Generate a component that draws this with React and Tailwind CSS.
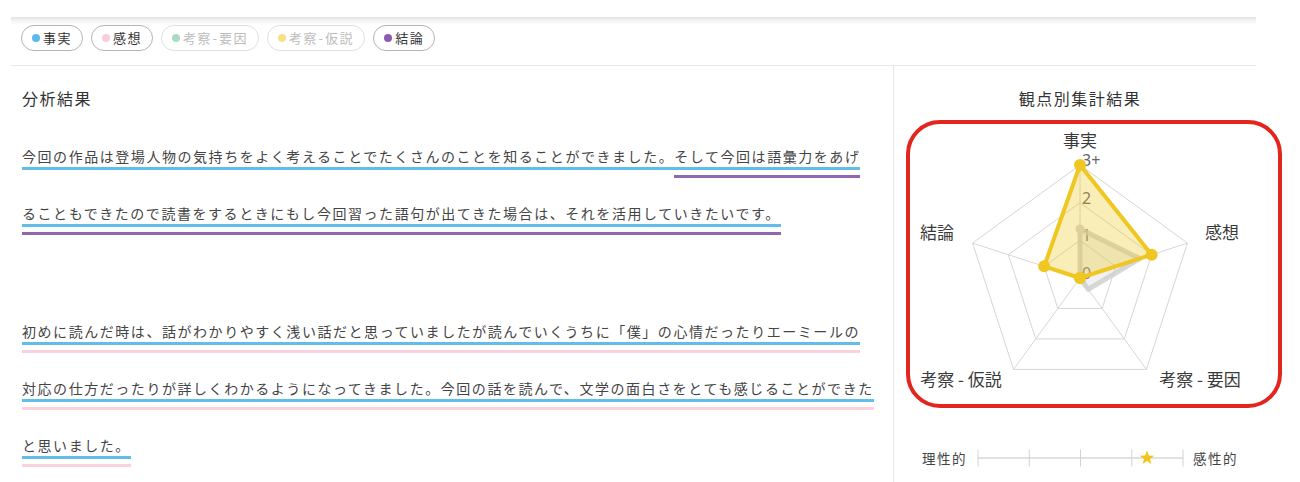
import React from 'react';

const BLUE = 'bg-[#62bdeb]';
const PURPLE = 'bg-[#8f68b1]';
const PINK = 'bg-[#f9d2df]';

const tags = [
  { label: '事実', dot: 'bg-[#5bb9ec]', on: true },
  { label: '感想', dot: 'bg-[#f8cddc]', on: true },
  { label: '考察 - 要因', dot: 'bg-[#a8dbc0]', on: false },
  { label: '考察 - 仮説', dot: 'bg-[#f3e388]', on: false },
  { label: '結論', dot: 'bg-[#8c5dae]', on: true },
];

const para1 = [
  [
    { t: '今回の作品は登場人物の気持ちをよく考えることでたくさんのことを知ることができました。', u: [BLUE] },
    { t: 'そして今回は語彙力をあげ', u: [BLUE, PURPLE] },
  ],
  [{ t: 'ることもできたので読書をするときにもし今回習った語句が出てきた場合は、それを活用していきたいです。', u: [BLUE, PURPLE] }],
];

const para2 = [
  [{ t: '初めに読んだ時は、話がわかりやすく浅い話だと思っていましたが読んでいくうちに「僕」の心情だったりエーミールの', u: [BLUE, PINK] }],
  [{ t: '対応の仕方だったりが詳しくわかるようになってきました。今回の話を読んで、文学の面白さをとても感じることができた', u: [BLUE, PINK] }],
  [{ t: 'と思いました。', u: [BLUE, PINK] }],
];

function Tag({ label, dot, on }) {
  const parts = label.split(' - ');
  return (
    <div
      className={`flex items-center gap-[3px] h-[26px] px-[10px] rounded-full border ${
        on ? 'border-[#b5b5b5] text-[#333]' : 'border-[#e0e0e0] text-[#bdbdbd]'
      }`}
    >
      <span className={`w-[8px] h-[8px] rounded-full ${dot}`} />
      <span className="flex text-[13px] tracking-[1.5px] leading-[24px] whitespace-nowrap">
        <span>{parts[0]}</span>
        {parts.length > 1 && (
          <>
            <span className="tracking-normal pl-[0.5px] pr-[2px]">-</span>
            <span>{parts[1]}</span>
          </>
        )}
      </span>
    </div>
  );
}

function Row({ segs }) {
  return (
    <div className="flex items-start h-[57px] whitespace-nowrap">
      {segs.map((s, i) => (
        <span key={i} className="flex flex-col">
          <span className="text-[14px] leading-[20px] tracking-[1.55px] text-[#444]">{s.t}</span>
          {s.u.map((c, j) => (
            <span key={j} className={`h-[3px] ${c} ${j === 0 ? 'mt-[0.5px]' : 'mt-[5px]'}`} />
          ))}
        </span>
      ))}
    </div>
  );
}

// radar geometry
const CX = 185;
const CY = 168;
const R = 113;
const pt = (i, v) => {
  const a = ((-90 + 72 * i) * Math.PI) / 180;
  const r = (v / 3) * R;
  return [CX + r * Math.cos(a), CY + r * Math.sin(a)];
};
const poly = (vals) => vals.map((v, i) => pt(i, v).join(',')).join(' ');

const yellow = [3, 2, 0, 0, 1];
const gray = [1.3, 1.67, 0.37, 0, 0];

const axisLabels = [
  { t: '事実', x: 185, y: 29 },
  { t: '感想', x: 327, y: 121 },
  { t: '考察 - 要因', x: 305, y: 268 },
  { t: '考察 - 仮説', x: 66, y: 268 },
  { t: '結論', x: 42, y: 121 },
];

function Radar() {
  return (
    <svg width="361" height="300" viewBox="0 0 361 300" className="block">
      {[1, 2, 3].map((l) => (
        <polygon key={l} points={poly([l, l, l, l, l])} fill="none" stroke="#d6d6d6" strokeWidth="1" />
      ))}
      {[0, 1, 2, 3, 4].map((i) => {
        const [x, y] = pt(i, 3);
        return <line key={i} x1={CX} y1={CY} x2={x} y2={y} stroke="#d6d6d6" strokeWidth="1" />;
      })}
      {['0', '1', '2', '3+'].map((t, l) => (
        <text
          key={t}
          x={CX + 2}
          y={CY - (l * R) / 3 + 1}
          fontSize="16"
          fill="#666"
          fontFamily="'Noto Sans', sans-serif"
        >
          {t}
        </text>
      ))}
      <polygon
        points={poly(gray)}
        fill="rgba(200,200,200,0.25)"
        stroke="rgba(205,205,205,0.8)"
        strokeWidth="5"
        strokeLinejoin="round"
      />
      <circle cx={pt(0, gray[0])[0]} cy={pt(0, gray[0])[1]} r="4.5" fill="#d6d6d6" />
      <polygon
        points={poly(yellow)}
        fill="rgba(240,200,20,0.3)"
        stroke="#efc622"
        strokeWidth="4"
        strokeLinejoin="round"
      />
      {yellow.map((v, i) => {
        const [x, y] = pt(i, v);
        return <circle key={i} cx={x} cy={y} r="6" fill="#efc622" />;
      })}
      {axisLabels.map((a) => (
        <text
          key={a.t}
          x={a.x}
          y={a.y}
          textAnchor="middle"
          dominantBaseline="central"
          fontSize="17"
          fill="#3a3a3a"
          fontFamily="'Noto Sans CJK JP', sans-serif"
        >
          {a.t}
        </text>
      ))}
    </svg>
  );
}

function Scale() {
  const ticks = [1, 52.25, 103.5, 154.75, 206];
  const sx = 170;
  const sy = 9;
  const star = Array.from({ length: 10 }, (_, k) => {
    const r = k % 2 === 0 ? 7.5 : 3.1;
    const a = ((-90 + 36 * k) * Math.PI) / 180;
    return `${sx + r * Math.cos(a)},${sy + r * Math.sin(a)}`;
  }).join(' ');
  return (
    <div className="flex items-center self-start ml-[28px] mt-[38px] h-[20px] text-[13.5px] tracking-[1.5px] text-[#444]">
      <span>理性的</span>
      <svg width="207" height="18" viewBox="0 0 207 18" className="ml-[10px] mr-[9px]">
        <line x1="1" y1="9" x2="206" y2="9" stroke="#d8d8d8" strokeWidth="1.5" />
        {ticks.map((x) => (
          <line key={x} x1={x} y1="0.5" x2={x} y2="17.5" stroke="#d2d2d2" strokeWidth="1" />
        ))}
        <polygon points={star} fill="#f0c419" />
      </svg>
      <span>感性的</span>
    </div>
  );
}

export default function App() {
  return (
    <div className="relative w-[1300px] h-[482px] overflow-hidden bg-white font-['Noto_Sans_CJK_JP','Noto_Sans',sans-serif]">
      <div className="ml-[11px] w-[1245px] pt-[17px]">
        <div className="h-[8px] bg-linear-to-b from-[#e2e2e2] via-[#f5f5f5] to-white" />
        {/* filter tags */}
        <div className="flex gap-2 pl-[10px] pb-[14px] border-b border-[#e8e8e8]">
          {tags.map((t) => (
            <Tag key={t.label} {...t} />
          ))}
        </div>

        <div className="flex h-[420px]">
          <div className="w-[883px] shrink-0 border-r border-[#e6e6e6] pl-[11px] pt-[20px]">
            <h2 className="text-[16px] leading-[24px] tracking-[1.5px] text-[#333]">分析結果</h2>
            <div className="mt-[36px]">
              {para1.map((segs, i) => (
                <Row key={i} segs={segs} />
              ))}
            </div>
            <div className="mt-[61px]">
              {para2.map((segs, i) => (
                <Row key={i} segs={segs} />
              ))}
            </div>
          </div>

          <div className="flex-1 flex flex-col items-center pt-[20px]">
            <h2 className="text-[16px] leading-[24px] tracking-[1.5px] text-[#333] pl-[10px]">観点別集計結果</h2>
            <Radar />
            <Scale />
          </div>
        </div>
      </div>

      {/* highlight annotation */}
      <div className="absolute left-[906px] top-[120px] w-[376px] h-[288px] border-[4px] border-[#e3261d] rounded-[34px] pointer-events-none" />
    </div>
  );
}
